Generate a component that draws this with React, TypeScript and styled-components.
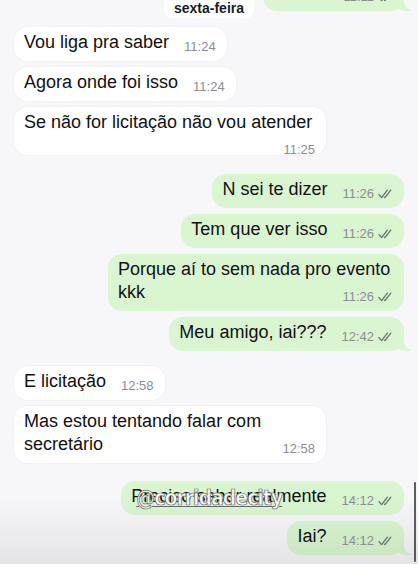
import React from "react"
import styled, { createGlobalStyle, css } from "styled-components"

type Side = "in" | "out"

type MessageType = {
    text: string
    time: string
    tail?: boolean
    watermark?: string
}

type GroupType = {
    side: Side
    gapTop: number
    messages: MessageType[]
}

const PAGE_BG = "#f7f7fa"
const GREEN = "#d9f6d1"

const groups: GroupType[] = [
    { side: "out", gapTop: 0, messages: [{ text: "Beleza", time: "11:11", tail: true }] },
    {
        side: "in",
        gapTop: 16,
        messages: [
            { text: "Vou liga pra saber", time: "11:24" },
            { text: "Agora onde foi isso", time: "11:24" },
            { text: "Se não for licitação não vou atender", time: "11:25" },
        ],
    },
    {
        side: "out",
        gapTop: 19,
        messages: [
            { text: "N sei te dizer", time: "11:26" },
            { text: "Tem que ver isso", time: "11:26" },
            { text: "Porque aí to sem nada pro evento kkk", time: "11:26" },
            { text: "Meu amigo, iai???", time: "12:42", tail: true },
        ],
    },
    {
        side: "in",
        gapTop: 15,
        messages: [
            { text: "E licitação", time: "12:58" },
            { text: "Mas estou tentando falar com secretário", time: "12:58" },
        ],
    },
    {
        side: "out",
        gapTop: 18,
        messages: [
            { text: "Preciso saber realmente", time: "14:12", watermark: "@corridadecity" },
            { text: "Iai?", time: "14:12", tail: true },
        ],
    },
]

const DoubleCheck = () => (
    <svg width="15" height="10" viewBox="0 0 15 10" fill="none">
        <path d="M1 5.6 L3.6 8.6 L9.4 1.2" stroke="#66736a" strokeWidth="1.3" strokeLinecap="round" strokeLinejoin="round" />
        <path d="M6.4 8.1 L6.9 8.6 L12.8 1.2" stroke="#66736a" strokeWidth="1.3" strokeLinecap="round" strokeLinejoin="round" />
    </svg>
)

export default function App() {
    return (
        <>
            <GlobalStyle />
            <Screen>
                <DateChip>sexta-feira</DateChip>
                <Chat>
                    {groups.map((group, gi) => (
                        <Group key={gi} $side={group.side} $gapTop={group.gapTop}>
                            {group.messages.map((m, mi) => (
                                <Bubble key={mi} $side={group.side} $tail={!!m.tail}>
                                    {m.text}
                                    <Meta>
                                        {m.time}
                                        {group.side === "out" && <DoubleCheck />}
                                    </Meta>
                                    {m.watermark && <Watermark>{m.watermark}</Watermark>}
                                </Bubble>
                            ))}
                        </Group>
                    ))}
                </Chat>
                <Scrollbar />
                <BottomShade />
            </Screen>
        </>
    )
}

const GlobalStyle = createGlobalStyle`
    html, body {
        margin: 0;
        padding: 0;
        background: ${PAGE_BG};
    }
    * {
        box-sizing: border-box;
    }
`

const Screen = styled.div`
    position: relative;
    width: 418px;
    height: 564px;
    overflow: hidden;
    background: ${PAGE_BG};
    font-family: "Liberation Sans", Arial, sans-serif;
    color: #111;
`

const Chat = styled.div`
    display: flex;
    flex-direction: column;
    padding: 0 14px;
    margin-top: -23px;
`

const Group = styled.div<{ $side: Side; $gapTop: number }>`
    display: flex;
    flex-direction: column;
    align-items: ${p => (p.$side === "in" ? "flex-start" : "flex-end")};
    gap: 6px;
    margin-top: ${p => p.$gapTop}px;
`

const Bubble = styled.div<{ $side: Side; $tail: boolean }>`
    position: relative;
    display: flow-root;
    width: fit-content;
    max-width: ${p => (p.$side === "in" ? 312 : 296)}px;
    padding: 4px 11px 7px 10px;
    border-radius: 14px;
    font-size: 18px;
    line-height: 23px;
    background: ${p => (p.$side === "in" ? "#ffffff" : GREEN)};
    box-shadow: ${p => (p.$side === "in" ? "0 0 0 1px rgba(0,0,0,0.025)" : "none")};

    ${p =>
        p.$tail &&
        css`
            &::before {
                content: "";
                position: absolute;
                right: -7px;
                bottom: 0;
                width: 20px;
                height: 16px;
                background: ${GREEN};
                border-bottom-left-radius: 16px 14px;
            }
            &::after {
                content: "";
                position: absolute;
                right: -10px;
                bottom: 0;
                width: 10px;
                height: 16px;
                background: ${PAGE_BG};
                border-bottom-left-radius: 10px;
            }
        `}
`

const Meta = styled.span`
    position: relative;
    top: 4px;
    z-index: 1;
    float: right;
    display: flex;
    align-items: center;
    gap: 4px;
    margin: 5px 0 -5px 15px;
    font-size: 13px;
    line-height: 14px;
    color: #8d8d92;
    white-space: nowrap;
`

const DateChip = styled.div`
    position: absolute;
    top: -7px;
    left: 209px;
    transform: translateX(-50%);
    z-index: 2;
    padding: 6px 10px 1px;
    border-radius: 8px;
    background: #ffffff;
    font-size: 14px;
    font-weight: 700;
    line-height: 18px;
    color: #1c1c1e;
`

const Watermark = styled.span`
    position: absolute;
    left: 15px;
    top: 4px;
    font-family: "DejaVu Sans Condensed", "Liberation Sans Narrow", sans-serif;
    font-size: 21px;
    font-weight: 700;
    line-height: 26px;
    letter-spacing: -1px;
    color: rgba(255, 255, 255, 0.94);
    -webkit-text-stroke: 0.7px #6a6a6a;
    text-decoration: underline;
    text-decoration-thickness: 1px;
    text-underline-offset: 1px;
    white-space: nowrap;
`

const Scrollbar = styled.div`
    position: absolute;
    right: 2px;
    top: 482px;
    width: 2px;
    height: 80px;
    border-radius: 1px;
    background: #5f5f5f;
`

const BottomShade = styled.div`
    position: absolute;
    left: 0;
    right: 0;
    bottom: 0;
    height: 70px;
    pointer-events: none;
    background: linear-gradient(to bottom, rgba(0, 0, 0, 0), rgba(0, 0, 0, 0.075));
`
